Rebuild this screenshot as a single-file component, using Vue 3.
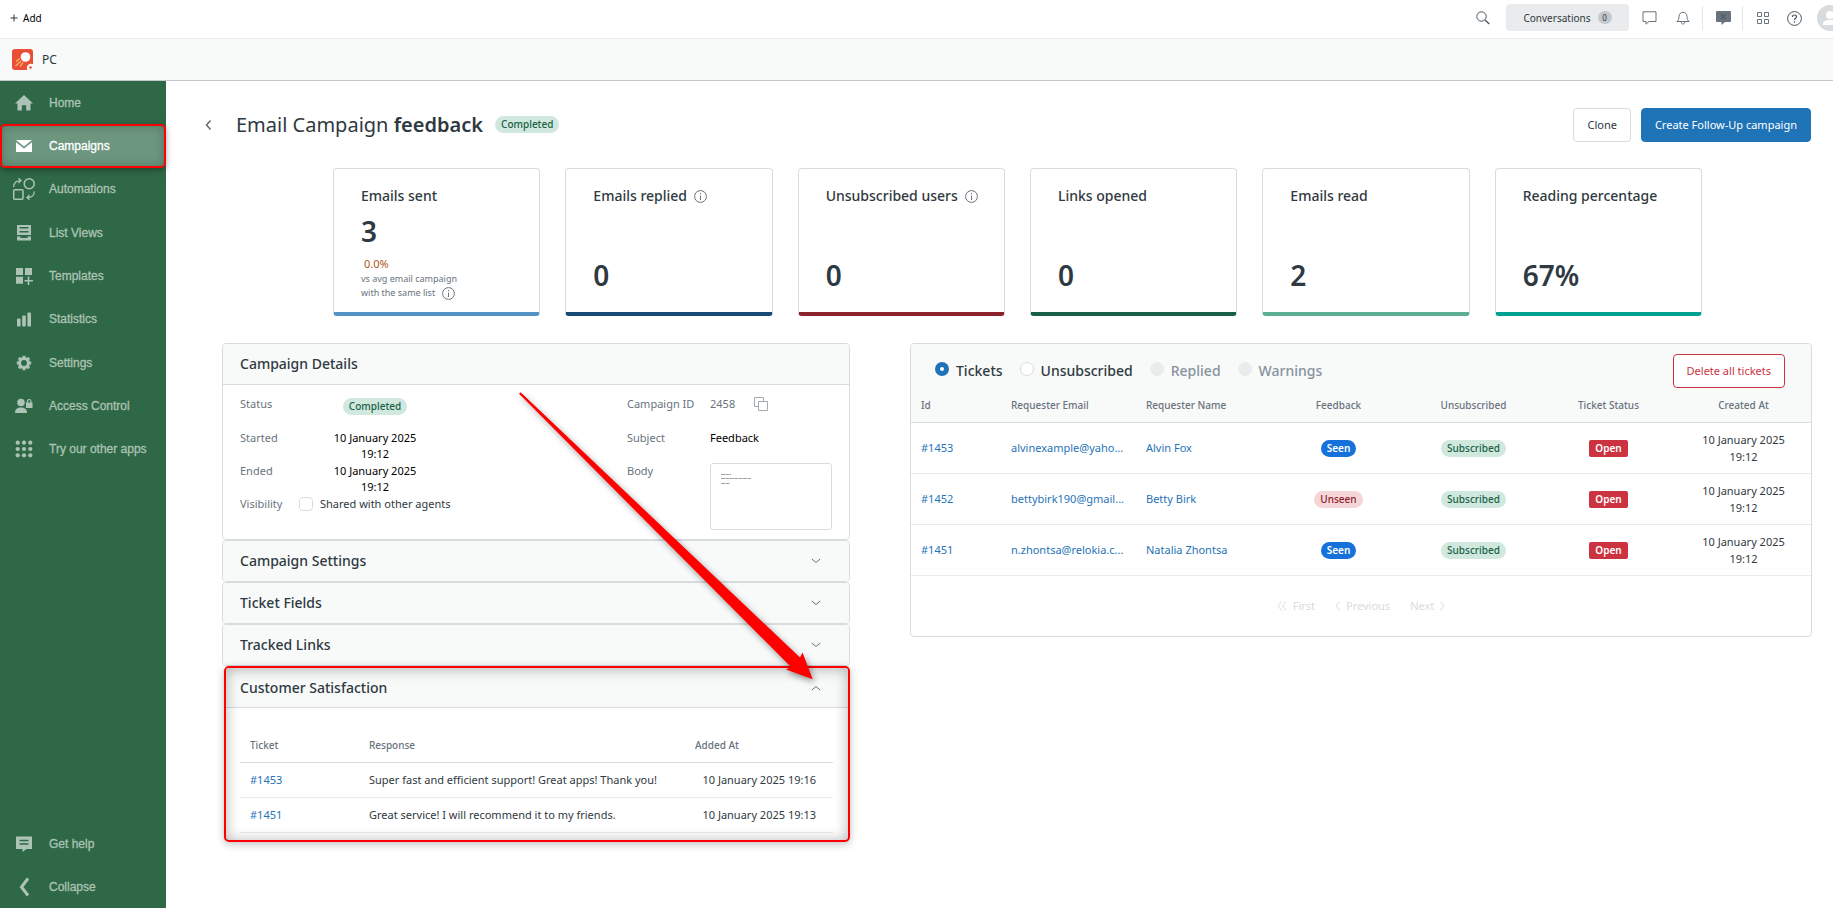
<script setup>
import { ref } from 'vue'

const nav = ['Home', 'Campaigns', 'Automations', 'List Views', 'Templates', 'Statistics', 'Settings', 'Access Control', 'Try our other apps']
const footerNav = ['Get help', 'Collapse']
const active = 'Campaigns'

const stats = [
  { title: 'Emails sent', value: '3', tone: 'sky', compare: true },
  { title: 'Emails replied', value: '0', tone: 'navy', info: true },
  { title: 'Unsubscribed users', value: '0', tone: 'wine', info: true },
  { title: 'Links opened', value: '0', tone: 'forest' },
  { title: 'Emails read', value: '2', tone: 'mint' },
  { title: 'Reading percentage', value: '67%', tone: 'teal' }
]

const collapsed = ['Campaign Settings', 'Ticket Fields', 'Tracked Links']
const shared = ref(false)
const filter = ref('Tickets')
const filters = [
  { name: 'Tickets' },
  { name: 'Unsubscribed' },
  { name: 'Replied', disabled: true },
  { name: 'Warnings', disabled: true }
]

const responses = [
  { id: '#1453', text: 'Super fast and efficient support! Great apps! Thank you!', at: '10 January 2025 19:16' },
  { id: '#1451', text: 'Great service! I will recommend it to my friends.', at: '10 January 2025 19:13' }
]

const tickets = [
  { id: '#1453', email: 'alvinexample@yaho...', name: 'Alvin Fox', feedback: 'Seen' },
  { id: '#1452', email: 'bettybirk190@gmail...', name: 'Betty Birk', feedback: 'Unseen' },
  { id: '#1451', email: 'n.zhontsa@relokia.c...', name: 'Natalia Zhontsa', feedback: 'Seen' }
]
</script>

<template>
  <div class="app">
    <header class="topbar">
      <button class="add">
        <svg width="8" height="8" viewBox="0 0 8 8"><path d="M4 0.500v7M0.500 4h7" stroke="#2f3941" /></svg>
        Add
      </button>
      <div class="tools">
        <button class="tool search" aria-label="Search">
          <svg width="14" height="14" viewBox="0 0 14 14" fill="none" stroke="#49545c"><circle cx="5.500" cy="5.500" r="4.700" /><path d="M9 9l4.300 4" stroke-width="1.300" /></svg>
        </button>
        <button class="conversations">Conversations <span class="count">0</span></button>
        <button class="tool" aria-label="Messages">
          <svg width="15" height="14" viewBox="0 0 15 14" fill="none" stroke="#68737d"><path d="M1 .8h13v9.700H7L4 13.200v-2.700H1z" /></svg>
        </button>
        <button class="tool" aria-label="Notifications">
          <svg width="14" height="14" viewBox="0 0 14 14" fill="none" stroke="#68737d"><path d="M.6 10.500h12.800M1 10.500c1.600-1 1.900-2.500 2-5C3.200 2.800 4.600 1.300 7 1.300s3.800 1.500 4 4.200c.1 2.500.4 4 2 5M5.300 11c.2 1.500.8 2 1.700 2s1.500-.5 1.700-2" /></svg>
        </button>
        <span class="sep"></span>
        <button class="tool" aria-label="Chat status">
          <svg width="15" height="14" viewBox="0 0 15 14"><path d="M1 0h13q1 0 1 1v9q0 1-1 1H9l-3.500 3v-3H1q-1 0-1-1V1q0-1 1-1z" fill="#68737d" /><path d="M5 3.300l5 4.800M10 3.300L5 8.100" stroke="#525c65" stroke-width="1.400" /></svg>
        </button>
        <span class="sep"></span>
        <button class="tool" aria-label="Products">
          <svg width="12" height="12" viewBox="0 0 12 12" fill="none" stroke="#68737d"><path d="M.5.5h4v4h-4zM7.500.5h4v4h-4zM.5 7.500h4v4h-4zM7.500 7.500h4v4h-4z" /></svg>
        </button>
        <button class="tool help" aria-label="Help">
          <svg width="15" height="15" viewBox="0 0 15 15" fill="none" stroke="#49545c"><circle cx="7.500" cy="7.500" r="6.900" /><path d="M5.500 6c0-1.300.9-2 2-2s2 .7 2 1.800c0 1.500-2 1.500-2 3.100" stroke-width="1.200" /><circle cx="7.500" cy="10.900" r=".5" fill="#49545c" stroke-width=".6" /></svg>
        </button>
        <button class="avatar" aria-label="Profile">
          <svg width="26" height="26" viewBox="0 0 26 26"><circle cx="13" cy="13" r="13" fill="#d8dcde" /><circle cx="13" cy="10" r="4" fill="#fff" /><path d="M6 20c0-4 2.500-5 7-5s7 1 7 5z" fill="#fff" /></svg>
        </button>
      </div>
    </header>

    <div class="appbar">
      <svg width="21" height="21" viewBox="0 0 21 21">
        <rect width="21" height="21" rx="3" fill="#eb4e36" />
        <circle cx="13.500" cy="8" r="4.800" fill="#fff" />
        <path d="M8 9.500l-4 3M9 12l-5.500 5M11 13.500l-3 4" stroke="#f9b65f" stroke-width="1.300" />
        <circle cx="19" cy="19" r="4.200" fill="#f8f9f9" /><circle cx="18.500" cy="18.500" r="1.300" fill="#eb4e36" />
      </svg>
      <span>PC</span>
    </div>

    <div class="body">
      <aside class="sidebar">
        <nav class="main-nav">
          <a v-for="n in nav" :key="n" href="#" class="item" :class="{ active: n === active }">
            <svg width="24" height="24" viewBox="0 0 24 24" fill="currentColor">
              <path v-if="n === 'Home'" d="M12 4l9 8.500h-2.500V19.500h-4.300v-5.200H9.800v5.200H5.500v-7H3z" />
              <g v-else-if="n === 'Campaigns'"><path d="M4 6h16l-8 6.500z" /><path d="M4 8.200l8 6.300 8-6.300V18H4z" /></g>
              <g v-else-if="n === 'Automations'" fill="none" stroke="currentColor" stroke-width="1.500"><rect x="1.700" y="12.700" width="9.300" height="9.500" rx="1" /><circle cx="17.200" cy="6.800" r="5" /><path d="M1.700 10c0-4.500 2.300-6.400 7-6.400M6.500 1.300L9 3.600 6.500 6M22.300 14.500c0 4.200-2 5.900-6.500 5.900M17.500 18l-2.500 2.400 2.500 2.400" stroke-width="1.300" /></g>
              <g v-else-if="n === 'List Views'"><path fill-rule="evenodd" d="M5 4h14v10H5zM7.500 6v1.500h9V6zM7.500 10v1.500h9V10z" /><path d="M5 15.500h3.500V17h7v-1.500H19V19.500H5z" /></g>
              <g v-else-if="n === 'Templates'"><path d="M4 4h7v7H4zM13 4h7v7h-7zM4 12.800h7v7H4z" /><path d="M15.700 12.500h1.600V16H21v1.500h-3.700V21h-1.600v-3.500H12.500V16h3.200z" /></g>
              <g v-else-if="n === 'Statistics'"><rect x="5" y="11.500" width="3.600" height="8" rx="1" /><rect x="10.200" y="8.500" width="3.600" height="11" rx="1" /><rect x="15.400" y="5.500" width="3.600" height="14" rx="1" /></g>
              <g v-else-if="n === 'Settings'"><circle cx="12" cy="12" r="4.400" fill="none" stroke="currentColor" stroke-width="3" /><path d="M12 4.800v3M12 16.200v3M4.800 12h3M16.200 12h3M6.900 6.900l2 2M15.100 15.100l2 2M6.900 17.100l2-2M15.100 8.900l2-2" stroke="currentColor" stroke-width="3" /></g>
              <g v-else-if="n === 'Access Control'"><circle cx="9" cy="8.500" r="3.800" /><path d="M3 19c0-4 2.500-5.500 6-5.500s6 1.500 6 5.500z" /><rect x="14" y="8.500" width="6.500" height="5.500" /><path d="M15.500 9V7.200a1.700 1.700 0 013.400 0V9" fill="none" stroke="currentColor" stroke-width="1.200" /></g>
              <g v-else><template v-for="y in 3" :key="y"><circle v-for="x in 3" :key="x" :cx="x * 6.300 - .6" :cy="y * 6.300 - .6" r="2.100" /></template></g>
            </svg>
            <span>{{ n }}</span>
          </a>
        </nav>
        <nav class="foot-nav">
          <a v-for="n in footerNav" :key="n" href="#" class="item">
            <svg width="24" height="24" viewBox="0 0 24 24" fill="currentColor">
              <path v-if="n === 'Get help'" fill-rule="evenodd" d="M4 4.500h16V17h-5.500l-4 3v-3H4zM7.500 7.800v1.500h9V7.800zM7.500 11.300v1.500h9v-1.500z" />
              <path v-else d="M16 3.500L9.500 12l6.500 8.500" fill="none" stroke="currentColor" stroke-width="3" />
            </svg>
            <span>{{ n }}</span>
          </a>
        </nav>
      </aside>

      <main class="content">
        <div class="heading">
          <button class="back" aria-label="Back"><svg width="7" height="12" viewBox="0 0 7 12"><path d="M5.500 1.500L1.500 6l4 4.500" fill="none" stroke="#5f6b75" stroke-width="1.500" /></svg></button>
          <h1>Email Campaign <b>feedback</b></h1>
          <span class="pill green">Completed</span>
          <div class="actions">
            <button class="btn">Clone</button>
            <button class="btn primary">Create Follow-Up campaign</button>
          </div>
        </div>

        <section class="stats">
          <article v-for="s in stats" :key="s.title" class="stat" :class="s.tone">
            <h2>{{ s.title }}<svg v-if="s.info" class="info" width="13" height="13" viewBox="0 0 13 13"><circle cx="6.500" cy="6.500" r="5.900" fill="none" stroke="#68737d" /><path d="M6.500 5.500V10M6.500 3v1.200" stroke="#68737d" /></svg></h2>
            <strong>{{ s.value }}</strong>
            <div v-if="s.compare" class="compare">
              <em>0.0%</em>
              <p>vs avg email campaign<br />with the same list<svg class="info" width="13" height="13" viewBox="0 0 13 13"><circle cx="6.500" cy="6.500" r="5.900" fill="none" stroke="#68737d" /><path d="M6.500 5.500V10M6.500 3v1.200" stroke="#68737d" /></svg></p>
            </div>
          </article>
        </section>

        <div class="columns">
          <div class="left">
            <section class="panel">
              <h3 class="panel-head">Campaign Details</h3>
              <div class="details">
                <dl class="facts">
                  <dt>Status</dt><dd><span class="pill green">Completed</span></dd>
                  <dt>Started</dt><dd>10 January 2025<br />19:12</dd>
                  <dt>Ended</dt><dd>10 January 2025<br />19:12</dd>
                  <dt>Visibility</dt>
                  <dd class="share"><label><input v-model="shared" type="checkbox" />Shared with other agents</label></dd>
                </dl>
                <dl class="facts message">
                  <dt>Campaign ID</dt>
                  <dd class="muted">2458
                    <button class="copy" aria-label="Copy ID"><svg width="14" height="14" viewBox="0 0 14 14" fill="none" stroke="#a3abb1"><path d="M4 9.500H.5v-9h9V4M4.500 4.500h9v9h-9z" /></svg></button>
                  </dd>
                  <dt>Subject</dt><dd>Feedback</dd>
                  <dt>Body</dt>
                  <dd><div class="preview"><svg width="31" height="12" viewBox="0 0 31 12" stroke="#a5a0aa"><path d="M0 1.500h10M0 5.500h30M0 10.500h9" stroke-dasharray="4 .4" /></svg></div></dd>
                </dl>
              </div>
            </section>

            <section v-for="c in collapsed" :key="c" class="panel">
              <h3><button class="panel-head">{{ c }}<svg width="10" height="6" viewBox="0 0 10 6"><path d="M.8 1l4.200 3.500L9.200 1" fill="none" stroke="#68737d" /></svg></button></h3>
            </section>

            <section class="panel marked">
              <h3><button class="panel-head open">Customer Satisfaction<svg width="10" height="6" viewBox="0 0 10 6"><path d="M.8 5L5 1.500 9.200 5" fill="none" stroke="#68737d" /></svg></button></h3>
              <div class="responses">
                <table>
                  <thead><tr><th class="c-id">Ticket</th><th>Response</th><th class="c-at">Added At</th></tr></thead>
                  <tbody>
                    <tr v-for="r in responses" :key="r.id"><td><a href="#">{{ r.id }}</a></td><td>{{ r.text }}</td><td class="at">{{ r.at }}</td></tr>
                  </tbody>
                </table>
              </div>
            </section>

            <svg class="arrow" width="294" height="288" viewBox="0 0 294 288"><path d="M0 1.800L1.600.3 281 265.500l2.500-5L293.700 287.300 267 277.500l5-2.500z" fill="#f00" /></svg>
          </div>

          <section class="panel tickets">
            <div class="tickets-head">
              <div class="filters">
                <label v-for="f in filters" :key="f.name" :class="{ off: f.disabled }">
                  <input v-model="filter" type="radio" name="filter" :value="f.name" :disabled="f.disabled" />{{ f.name }}
                </label>
              </div>
              <button class="btn danger">Delete all tickets</button>
            </div>
            <table>
              <thead>
                <tr><th class="id">Id</th><th>Requester Email</th><th>Requester Name</th><th class="mid">Feedback</th><th class="mid">Unsubscribed</th><th class="mid">Ticket Status</th><th class="mid">Created At</th></tr>
              </thead>
              <tbody>
                <tr v-for="t in tickets" :key="t.id">
                  <td><a href="#">{{ t.id }}</a></td>
                  <td><a href="#">{{ t.email }}</a></td>
                  <td><a href="#">{{ t.name }}</a></td>
                  <td class="mid"><span class="pill" :class="t.feedback === 'Seen' ? 'blue' : 'pink'">{{ t.feedback }}</span></td>
                  <td class="mid"><span class="pill green">Subscribed</span></td>
                  <td class="mid"><span class="pill red">Open</span></td>
                  <td class="mid">10 January 2025<br />19:12</td>
                </tr>
              </tbody>
            </table>
            <div class="pager">
              <button disabled><svg width="10" height="10" viewBox="0 0 10 10"><path d="M4.500.5L1 5l3.500 4.500M9 .5L5.500 5 9 9.500" /></svg>First</button>
              <button disabled><svg width="5" height="10" viewBox="0 0 5 10"><path d="M4.500.5L1 5l3.500 4.500" /></svg>Previous</button>
              <button disabled>Next<svg width="5" height="10" viewBox="0 0 5 10"><path d="M.5.5L4 5 .5 9.500" /></svg></button>
            </div>
          </section>
        </div>
      </main>
    </div>
  </div>
</template>

<style>
body { margin: 0; background: #fff; }
</style>

<style scoped>
* { box-sizing: border-box; }
.app {
  display: flex; flex-direction: column; min-height: 100vh;
  overflow-x: hidden;
  color: #2f3941; font: 11px/16px "Noto Sans", "Open Sans", sans-serif;
}
button { font: inherit; color: inherit; background: none; border: 0; padding: 0; cursor: pointer; }
h1, h2, h3, p, dl, dd { margin: 0; }
a { color: #1f73b7; text-decoration: none; }
svg { flex: none; }

.topbar { display: flex; align-items: center; justify-content: space-between; height: 39px; padding: 0 0 2px 10px; border-bottom: 1px solid #e9ebed; overflow: hidden; }
.add { display: flex; align-items: center; gap: 5px; font-size: 10px; color: #000; }
.tools { display: flex; align-items: center; margin-right: -10px; }
.tool { display: flex; align-items: center; justify-content: center; width: 34px; height: 28px; }
.search { margin-right: 6px; }
.help { width: 28px; }
.conversations { display: flex; align-items: center; justify-content: center; gap: 7px; width: 123px; height: 27px; margin: 0 3px 1px 0; border-radius: 4px; background: #e9ebed; font-size: 10px; }
.count { width: 14px; height: 13px; line-height: 13px; border-radius: 7px; background: #c2c8cc; font-size: 8px; }
.sep { width: 1px; height: 24px; margin: 0 3px 0 2px; background: #e3e6e8; }
.avatar { margin-left: 9px; height: 26px; }

.appbar { display: flex; align-items: center; gap: 9px; height: 42px; padding-left: 12px; border-bottom: 1px solid #c2c8cc; background: #f8f9f9; font-size: 12px; }

.body { flex: 1; display: flex; }
.sidebar { flex: none; display: flex; flex-direction: column; justify-content: space-between; width: 166px; background: #2f6846; }
.main-nav { height: 390px; }
.foot-nav { height: 86px; }
.main-nav, .foot-nav { display: flex; flex-direction: column; }
.item { flex: 1; display: flex; align-items: center; gap: 13px; padding-left: 12px; color: #acc3b5; font: 12px/16px "Liberation Sans", sans-serif; -webkit-text-stroke: 0.3px currentColor; }
.active { color: #fff; background: #6c967e; outline: 2px solid #f00; outline-offset: -2px; border-radius: 5px; box-shadow: 0 2px 6px rgba(0, 0, 0, .35), inset 0 0 12px rgba(0, 0, 0, .3); }

.content { flex: 1; min-width: 0; }
.heading { display: flex; align-items: center; height: 87px; padding: 0 22px 0 39px; }
.back { width: 7px; margin-right: 24px; display: flex; }
h1 { font-size: 20px; line-height: 28px; font-weight: 400; }
h1 b { font-weight: 600; }
h1 + .pill { margin-left: 12px; }
.actions { display: flex; gap: 10px; margin-left: auto; }
.btn { height: 34px; padding: 0 13px; border: 1px solid #d8dcde; border-radius: 4px; background: #fff; }
.primary { background: #1f73b7; border-color: #1f73b7; color: #fff; }
.danger { border-color: #cc3340; color: #cc3340; }

.pill { display: inline-block; height: 17px; padding: 0 6px; border-radius: 9px; font-size: 10px; line-height: 17px; font-weight: 500; vertical-align: middle; }
.green { background: #d1e8df; color: #186146; }
.blue { background: #1672da; color: #fff; font-weight: 600; }
.pink { background: #f5d5d8; color: #8c232c; }
.red { background: #cc3340; color: #fff; border-radius: 2px; font-weight: 600; }

.stats { display: grid; grid-template-columns: repeat(6, 1fr); gap: 25px; padding: 0 131px 0 167px; }
.stat { display: flex; flex-direction: column; height: 148px; padding: 17px 0 0 27px; border: 1px solid #d8dcde; border-radius: 4px; border-bottom: 4px solid; }
.stat h2 { display: flex; align-items: center; gap: 7px; font-size: 14px; line-height: 20px; font-weight: 500; white-space: nowrap; }
.stat strong { margin: auto 0 20px; font-size: 28px; line-height: 34px; font-weight: 600; }
.sky strong { margin: 8px 0; }
.sky { border-bottom-color: #5293c7; }
.navy { border-bottom-color: #144a75; }
.wine { border-bottom-color: #8c232c; }
.forest { border-bottom-color: #186146; }
.mint { border-bottom-color: #5eae91; }
.teal { border-bottom-color: #02a191; }
.compare em { display: block; padding-left: 3px; font-style: normal; color: #ad5918; }
.compare p { font-size: 9px; line-height: 14px; color: #68737d; white-space: nowrap; }
.compare .info { margin-left: 7px; vertical-align: middle; }

.columns { display: grid; grid-template-columns: 628fr 902fr; gap: 60px; align-items: start; padding: 27px 21px 0 56px; }
.left { position: relative; min-width: 0; }
.panel { border: 1px solid #d8dcde; border-radius: 4px; overflow: hidden; background: #fff; }
.panel h3 { font-size: 14px; line-height: 20px; font-weight: 500; }
.panel-head { display: flex; align-items: center; justify-content: space-between; width: 100%; height: 40px; padding: 0 28px 0 17px; background: #f8f9f9; text-align: left; }
h3.panel-head { height: 41px; border-bottom: 1px solid #d8dcde; }
.marked { position: relative; border: 2px solid #f00; border-radius: 5px; box-shadow: 0 2px 8px rgba(0, 0, 0, .25); margin-left: 2px; }
.marked::after { content: ""; position: absolute; inset: 0; box-shadow: inset 0 1px 14px rgba(0, 0, 0, .3); pointer-events: none; }
.marked .panel-head { padding: 0 27px 0 14px; border-bottom: 1px solid #d8dcde; }

.details { display: flex; justify-content: space-between; height: 154px; padding: 11px 17px 0; }
.facts { display: grid; grid-template-columns: 58px minmax(0, 1fr); grid-template-rows: 34px 33px 33px 20px; width: 212px; color: #68737d; }
.facts dd { color: #000; text-align: center; }
.facts dd.share { color: #2f3941; text-align: left; white-space: nowrap; }
.facts .pill { margin-top: 2px; vertical-align: top; }
.share label { display: flex; align-items: center; gap: 7px; }
.share input { appearance: none; flex: none; width: 14px; height: 14px; margin: 0 0 0 1px; border: 1px solid #d8dcde; border-radius: 4px; }
.message { grid-template-columns: 83px minmax(0, 1fr); width: 205px; }
.message dd { text-align: left; }
.facts .muted { display: flex; align-items: center; height: 16px; gap: 19px; color: #68737d; }
.copy { display: flex; }
.preview { height: 67px; padding: 9px 10px; border: 1px solid #d8dcde; border-radius: 3px; }
.preview svg { display: block; }

table { width: 100%; border-collapse: collapse; table-layout: fixed; }
th { font-size: 10px; font-weight: 500; color: #68737d; text-align: left; padding: 0 10px; }
td { padding: 0 10px; white-space: nowrap; }
.mid { text-align: center; }
.responses { padding: 20px 15px 7px 14px; }
.responses th { height: 34px; border-bottom: 1px solid #d8dcde; }
.responses td { height: 35px; border-bottom: 1px solid #e9ebed; }
.c-id { width: 119px; }
.c-at { width: 148px; }
.responses .at { text-align: right; padding-right: 17px; }
.arrow { position: absolute; right: 37px; top: 49px; filter: drop-shadow(2px 3px 3px rgba(0, 0, 0, .4)); pointer-events: none; }

.tickets-head { display: flex; justify-content: space-between; align-items: center; height: 53px; padding: 0 26px 0 24px; background: #f8f9f9; }
.filters { display: flex; gap: 17px; font-size: 14px; line-height: 20px; font-weight: 500; }
.filters label { display: flex; align-items: center; gap: 7px; }
.filters input { appearance: none; width: 14px; height: 14px; margin: 0 0 3px; border: 1px solid #d8dcde; border-radius: 50%; background: #fff; }
.filters input:checked { border: 5px solid #1f73b7; }
.filters input:disabled { border-color: #e9ebed; background: #e9ebed; }
.off { color: #87929d; }
.tickets th { height: 25px; padding-bottom: 8px; background: #f8f9f9; border-bottom: 1px solid #d8dcde; }
.tickets .id { width: 10%; }
.tickets td { height: 51px; line-height: 17px; border-bottom: 1px solid #e9ebed; }
.pager { display: flex; justify-content: center; gap: 20px; padding: 22px 0; }
.pager button { display: flex; align-items: center; gap: 6px; color: #d8dcde; }
.pager path { fill: none; stroke: #d8dcde; }
</style>
